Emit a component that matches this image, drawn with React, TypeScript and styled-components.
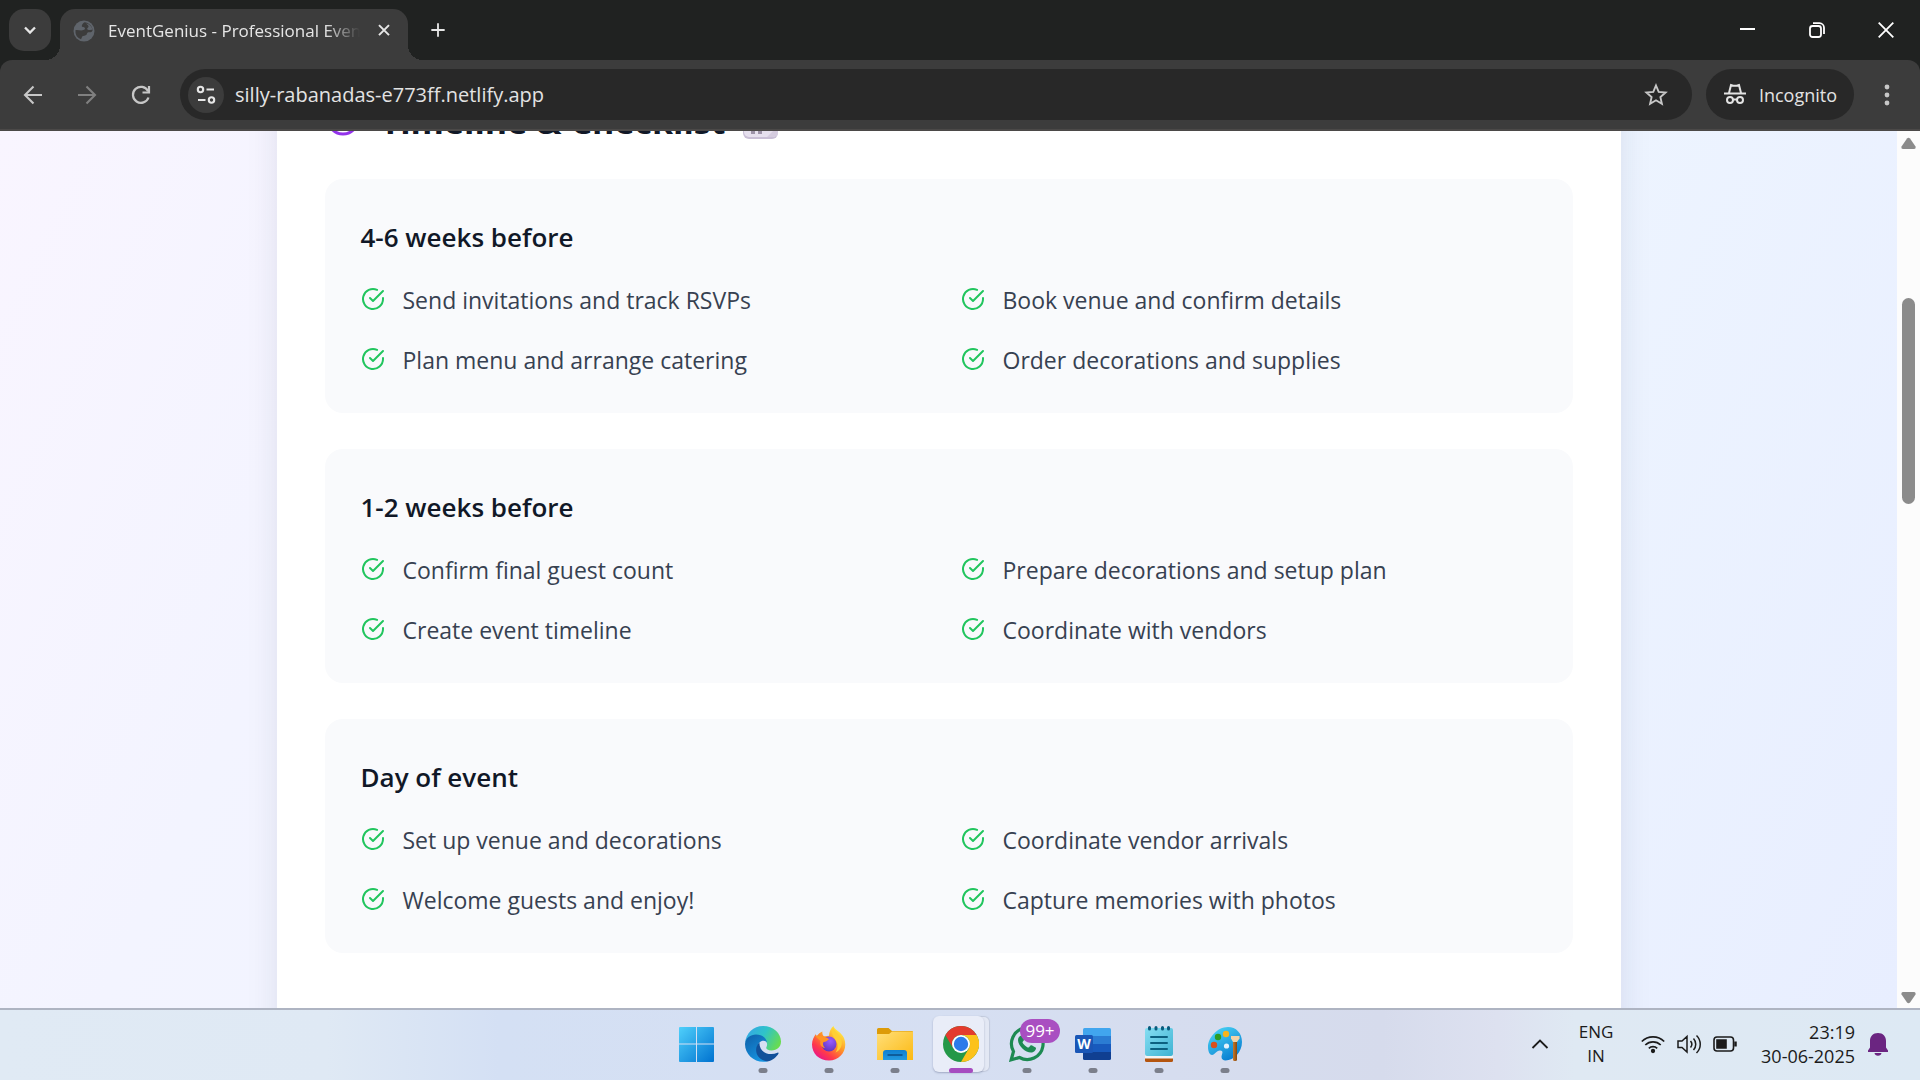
import React from 'react';
import styled, { createGlobalStyle } from 'styled-components';

const uiFont = `"Segoe UI", "Open Sans", "Noto Sans", sans-serif`;

const GlobalStyle = createGlobalStyle`
  * { box-sizing: border-box; }
  body { margin: 0; overflow: hidden; font-family: ${uiFont}; }
  button { border: 0; padding: 0; background: none; color: inherit; font: inherit; cursor: pointer; }
  h2, h3, ul { margin: 0; padding: 0; }
  svg { display: block; flex: none; }
`;

const Screen = styled.div`
  display: flex;
  flex-direction: column;
  height: 100vh;
`;

const TabStrip = styled.header`
  display: flex;
  align-items: flex-end;
  height: 60px;
  flex: none;
  padding-left: 9px;
  background: #202221;
  color: #e6e6e6;
`;

const TabSearch = styled.button`
  display: grid;
  place-items: center;
  width: 42px;
  height: 42px;
  margin: 0 9px 9px 0;
  border-radius: 15px;
  background: #3c3c3c;
`;

const Tab = styled.div`
  position: relative;
  display: flex;
  align-items: center;
  width: 348px;
  height: 51px;
  padding: 0 12px 8px 13px;
  border-radius: 15px 15px 0 0;
  background: #3c3c3c;

  &::before,
  &::after {
    content: '';
    position: absolute;
    bottom: 0;
    width: 15px;
    height: 15px;
  }
  &::before {
    left: -15px;
    background: radial-gradient(circle at 0 0, transparent 15px, #3c3c3c 15px);
  }
  &::after {
    right: -15px;
    background: radial-gradient(circle at 100% 0, transparent 15px, #3c3c3c 15px);
  }
`;

const TabTitle = styled.span`
  flex: 1;
  margin: 1px 12px 0 13px;
  overflow: hidden;
  white-space: nowrap;
  font-size: 17px;
  line-height: 24px;
  mask-image: linear-gradient(90deg, #000 86%, transparent);
`;

const IconButton = styled.button<{ $dim?: boolean; $size?: number }>`
  display: grid;
  place-items: center;
  flex: none;
  width: ${(p) => p.$size ?? 24}px;
  height: ${(p) => p.$size ?? 24}px;
  color: ${(p) => (p.$dim ? '#808080' : 'inherit')};
`;

const NewTab = styled(IconButton)`
  margin: 0 0 12px 12px;
`;

const WindowControls = styled.div`
  display: flex;
  align-self: stretch;
  margin-left: auto;
  color: #fff;
`;

const WindowButton = styled.button`
  display: grid;
  place-items: center;
  width: 69px;
`;

const ToolbarBack = styled.div`
  flex: none;
  background: #202221;
`;

const Toolbar = styled.nav`
  display: flex;
  align-items: center;
  height: 71px;
  padding: 0 15px 0 15px;
  border-bottom: 2px solid #4b4948;
  border-radius: 12px 12px 0 0;
  background: #3c3c3c;
  color: #c7c7c7;
`;

const NavButtons = styled.div`
  display: flex;
  gap: 18px;
  margin-right: 21px;
`;

const AddressBar = styled.div`
  display: flex;
  align-items: center;
  flex: 1;
  height: 51px;
  padding: 0 18px 0 8px;
  border-radius: 26px;
  background: #282828;
`;

const SiteInfo = styled.button`
  display: grid;
  place-items: center;
  width: 36px;
  height: 36px;
  border-radius: 50%;
  background: #3c3c3c;
  color: #e6e6e6;
`;

const AddressInput = styled.input`
  flex: 1;
  min-width: 0;
  padding: 0;
  margin-left: 11px;
  border: 0;
  outline: 0;
  background: transparent;
  color: #e3e3e3;
  font: 20px/30px ${uiFont};
`;

const IncognitoPill = styled.button`
  display: flex;
  align-items: center;
  gap: 12px;
  height: 51px;
  margin: 0 15px 0 14px;
  padding: 0 17px;
  border-radius: 26px;
  background: #282828;
  color: #e3e3e3;
  font-size: 18px;
`;

const Viewport = styled.div`
  display: flex;
  flex: 1;
  min-height: 0;
  overflow: hidden;
`;

const Page = styled.div`
  flex: 1;
  min-width: 0;
  overflow: hidden;
  background: linear-gradient(115deg, #f9f5ff 0%, #f3f4ff 22%, #edf4ff 70%, #e8eeff 100%);
`;

const Sheet = styled.main`
  max-width: 1344px;
  min-height: calc(100% + 72px);
  margin: -36px auto 0;
  padding: 0 48px;
  background: #fff;
  box-shadow: 0 0 30px rgba(30, 40, 80, 0.1);
`;

const SectionHeader = styled.div`
  display: flex;
  align-items: center;
  gap: 20px;
  height: 48px;
  margin-bottom: 36px;
  color: #9333ea;
`;

const SectionTitle = styled.h2`
  display: flex;
  align-items: center;
  gap: 18px;
  color: #111827;
  font-size: 34px;
  line-height: 52px;
  font-weight: 700;
  white-space: nowrap;
`;

const TitleText = styled.span`
  padding-top: 4px;
`;

const Phases = styled.div`
  display: grid;
  gap: 36px;
`;

const Phase = styled.section`
  padding: 37px 36px 35px;
  border-radius: 18px;
  background: #f9fafc;
`;

const PhaseTitle = styled.h3`
  margin-bottom: 24px;
  color: #111827;
  font-size: 26px;
  line-height: 42px;
  font-weight: 600;
`;

const TaskGrid = styled.ul`
  display: grid;
  grid-template-columns: 1fr 1fr;
  gap: 24px;
  list-style: none;
`;

const Task = styled.li`
  display: flex;
  gap: 18px;
  color: #374151;
  font-size: 23px;
  line-height: 36px;

  svg {
    margin-top: 5px;
    color: #22c55e;
  }
`;

const Scrollbar = styled.div`
  display: flex;
  flex-direction: column;
  align-items: center;
  width: 23px;
  padding: 6px 0 4px;
  background: #fcfcfc;
  color: #8b8b8b;
`;

const ScrollTrack = styled.div`
  flex: 1;
  width: 13px;
  padding-top: 149px;
`;

const ScrollThumb = styled.div`
  height: 206px;
  border-radius: 7px;
  background: #8b8b8b;
`;

const Taskbar = styled.footer`
  display: grid;
  grid-template-columns: 1fr auto 1fr;
  flex: none;
  height: 72px;
  border-top: 2px solid #aeb4c2;
  background: linear-gradient(90deg, #e0eaf4 0%, #dfe9f4 17%, #d4e0f4 26%, #d6dff2 50%, #d6dbec 72%, #dde1f0 78%, #dfe9f3 82%, #dde9f4 100%);
  color: #1b1b1b;
`;

const Apps = styled.div`
  grid-column: 2;
  display: flex;
  padding-left: 2px;
`;

const AppButton = styled.button`
  position: relative;
  display: grid;
  place-items: center;
  width: 66px;
  height: 68px;
`;

const ActiveTile = styled.span`
  position: absolute;
  top: 6px;
  left: 5px;
  width: 51px;
  height: 56px;
  border-radius: 6px;
  background: #e9edf8;
  box-shadow: 0 1px 2px rgba(60, 70, 110, 0.35), 6px 0 0 -1px #e3e8f4, 6px 0 1px 0 #c2cadc;
`;

const AppIcon = styled.span`
  position: relative;
`;

const Indicator = styled.span<{ $active?: boolean }>`
  position: absolute;
  bottom: 5px;
  left: 50%;
  width: ${(p) => (p.$active ? 24 : 9)}px;
  height: 5px;
  border-radius: 3px;
  background: ${(p) => (p.$active ? '#a64cc0' : '#7b7f8b')};
  transform: translateX(-50%);
`;

const Badge = styled.span`
  position: absolute;
  top: 9px;
  left: 26px;
  width: 40px;
  height: 24px;
  border-radius: 12px;
  background: #a94fc1;
  color: #fff;
  font-size: 17px;
  line-height: 24px;
  text-align: center;
`;

const Tray = styled.div`
  display: flex;
  align-items: center;
  justify-content: flex-end;
  padding: 0 30px 2px 0;
  font-size: 18px;
  line-height: 24px;
`;

const Language = styled.button`
  width: 48px;
  margin: 0 21px 0 20px;
  font-size: 17px;
  text-align: center;
`;

const Status = styled.button`
  display: flex;
  gap: 12px;
  margin-right: 24px;
`;

const Clock = styled.button`
  margin-right: 11px;
  text-align: right;
`;

const Stroke = ({ size = 24, width = 2, children, box = 24 }: { size?: number; width?: number; box?: number; children: React.ReactNode }) => (
  <svg width={size} height={size} viewBox={`0 0 ${box} ${box}`} fill="none" stroke="currentColor" strokeWidth={width} aria-hidden="true">
    {children}
  </svg>
);

const CheckIcon = () => (
  <Stroke>
    <g strokeLinecap="round" strokeLinejoin="round">
      <path d="M22 11.08V12a10 10 0 1 1-5.93-9.14" />
      <path d="m9 11 3 3L22 4" />
    </g>
  </Stroke>
);

const phases = [
  { title: '4-6 weeks before', tasks: ['Send invitations and track RSVPs', 'Book venue and confirm details', 'Plan menu and arrange catering', 'Order decorations and supplies'] },
  { title: '1-2 weeks before', tasks: ['Confirm final guest count', 'Prepare decorations and setup plan', 'Create event timeline', 'Coordinate with vendors'] },
  { title: 'Day of event', tasks: ['Set up venue and decorations', 'Coordinate vendor arrivals', 'Welcome guests and enjoy!', 'Capture memories with photos'] },
];

const WindowsLogo = () => (
  <svg width="36" height="36" viewBox="0 0 36 36">
    <defs>
      <linearGradient id="win" x1="0" y1="0" x2="1" y2="1">
        <stop offset="0" stopColor="#4fd0fb" />
        <stop offset="1" stopColor="#0072d0" />
      </linearGradient>
    </defs>
    <path fill="url(#win)" d="M0 2a1 1 0 0 1 1-1h16v16.500H0zM18 1h16a1 1 0 0 1 1 1v15.500H18zM0 18.500h17V36H1a1 1 0 0 1-1-1zM18 18.500h17V35a1 1 0 0 1-1 1H18z" />
  </svg>
);

const EdgeLogo = () => (
  <svg width="36" height="36" viewBox="0 0 36 36">
    <defs>
      <linearGradient id="eTop" x1="0" y1="0.2" x2="1" y2="0.6">
        <stop offset="0" stopColor="#35a6e8" />
        <stop offset="0.5" stopColor="#2fc3c9" />
        <stop offset="1" stopColor="#68dc50" />
      </linearGradient>
      <linearGradient id="eLeft" x1="0" y1="0" x2="0.6" y2="1">
        <stop offset="0" stopColor="#0f5fa8" />
        <stop offset="1" stopColor="#1593e0" />
      </linearGradient>
    </defs>
    <path fill="url(#eTop)" d="M0 17C1 7 8.500 0 18 0c10.500 0 18 7.500 18 15.500C36 21 32 24.500 26.500 24.500c-4.500 0-6-2-5-3.600 1.200-2 1-6.900-4.500-8.400C10 10.500 2 12 0 17z" />
    <path fill="url(#eLeft)" d="M0 18c.5-6 5.500-9.500 11-9.500 7 0 11 4.500 11 8.500 0-2-4-3.500-7-1-5 4.500-3 16 7.500 19.400C11 38 0 29.500 0 18z" />
    <path fill="#11509a" d="M14.500 16.500C8 22 11 34 22.500 35.400 28 34.500 32 30.500 33.500 27.500c.3-.8-.3-1.200-1-.8C24 30.500 14 26 14.500 16.500z" />
  </svg>
);

const FirefoxLogo = () => (
  <svg width="36" height="36" viewBox="0 0 36 36">
    <defs>
      <linearGradient id="ff" x1="0.85" y1="0.1" x2="0.2" y2="0.95">
        <stop offset="0" stopColor="#fff04a" />
        <stop offset="0.4" stopColor="#ff9a26" />
        <stop offset="0.75" stopColor="#ff3a4a" />
        <stop offset="1" stopColor="#e9158a" />
      </linearGradient>
      <radialGradient id="ffCore" cx="0.6" cy="0.3" r="0.8">
        <stop offset="0" stopColor="#9a5cff" />
        <stop offset="1" stopColor="#5a2fb8" />
      </radialGradient>
    </defs>
    <path fill="url(#ff)" d="M22.500 0c1 4 8 6 10.500 12 4.500 11.500-3.500 22.500-15 22.500C8 34.500 1 27.500 1 18.500 1 14 3 10.500 5 8c0 1.500.3 2 .8 2.500C7 8 9.500 6 11.500 5.500c-.5 1.500 0 3 1 4.500 2 .5 3.500 0 5.500-.3C18 6 20 2 22.500 0z" />
    <circle cx="18" cy="18" r="7.500" fill="url(#ffCore)" />
    <path fill="#ff9424" d="M4 10c4-1 7 .2 8.500 1.200 2-.2 4.500.3 5.500 2.300-2 1-3 2.500-5.500 2.500-1 2-.5 4 1.500 6-4-.5-5.500-4-4.500-7z" />
    <path fill="#ffcf35" d="M22 1c1 4 7 7.500 8.500 13 1.500 6-2 11-6 12.500 3-4 2.500-9 .5-12-1.500-2.500-6-7-3-13.500z" />
  </svg>
);

const FolderLogo = () => (
  <svg width="36" height="36" viewBox="0 0 36 36">
    <defs>
      <linearGradient id="fold" x1="0" y1="0" x2="1" y2="1">
        <stop offset="0" stopColor="#ffdf7a" />
        <stop offset="1" stopColor="#fcb912" />
      </linearGradient>
      <linearGradient id="foldTab" x1="0" y1="0" x2="0" y2="1">
        <stop offset="0" stopColor="#0f7fd0" />
        <stop offset="1" stopColor="#2399df" />
      </linearGradient>
    </defs>
    <path fill="#dd9b08" d="M0 3.500A1.500 1.500 0 0 1 1.500 2h10L15 5h20a1 1 0 0 1 1 1v6H0z" />
    <path fill="url(#fold)" d="M0 8h12l3-2.500h21V34H0z" />
    <path fill="url(#foldTab)" d="M6 27a3 3 0 0 1 3-3h18a3 3 0 0 1 3 3v7H6z" />
    <path stroke="#0b4c86" strokeWidth="1.500" d="M10.500 29h15" />
  </svg>
);

const ChromeLogo = () => (
  <svg width="36" height="36" viewBox="0 0 36 36">
    <circle cx="18" cy="18" r="18" fill="#249848" />
    <path fill="#e33b2e" d="M2.400 9A18 18 0 0 1 33.600 9H18a9 9 0 0 0-7.800 13.500z" />
    <path fill="#fcc21b" d="M33.600 9A18 18 0 0 1 18 36l7.800-13.500A9 9 0 0 0 18 9z" />
    <circle cx="18" cy="18" r="9" fill="#fff" />
    <circle cx="18" cy="18" r="7.200" fill="#2c7bea" />
  </svg>
);

const WhatsAppLogo = () => (
  <svg width="36" height="36" viewBox="0 0 36 36">
    <path fill="none" stroke="#1d8a52" strokeWidth="3.200" d="M2.200 33.800 4.500 25.500A15.800 15.800 0 1 1 10.500 31.500z" />
    <path fill="#1d8a52" d="M12.500 9.500c-2 .3-3.500 2-3.500 4.500 0 6 7.500 12.500 13 12.500 2.500 0 5-2 5-4.500 0-.5-4.500-3-5.200-2.700-.8.4-1.500 2.200-2.400 2.200-1.400 0-5.900-4-5.900-5.300 0-.8 1.500-1.600 1.500-2.500 0-.8-1.500-4.200-2.500-4.200z" />
  </svg>
);

const WordLetter = styled.span`
  position: absolute;
  left: 0;
  top: 9px;
  width: 18px;
  color: #fff;
  font-size: 14px;
  line-height: 18px;
  font-weight: 700;
  text-align: center;
`;

const WordLogo = () => (
  <>
    <svg width="36" height="36" viewBox="0 0 36 36">
      <path fill="#41a5ee" d="M8 3.500A1.500 1.500 0 0 1 9.500 2h25A1.500 1.500 0 0 1 36 3.500V10H8z" />
      <path fill="#2b7cd3" d="M8 10h28v8H8z" />
      <path fill="#185abd" d="M8 18h28v8H8z" />
      <path fill="#103f91" d="M8 26h28v6.500a1.500 1.500 0 0 1-1.500 1.500h-25A1.500 1.500 0 0 1 8 32.500z" />
      <rect y="9" width="18" height="18" rx="1.500" fill="#1a56b6" />
    </svg>
    <WordLetter>W</WordLetter>
  </>
);

const NotepadLogo = () => (
  <svg width="36" height="36" viewBox="0 0 36 36">
    <defs>
      <linearGradient id="note" x1="0" y1="0" x2="1" y2="1">
        <stop offset="0" stopColor="#86def2" />
        <stop offset="1" stopColor="#3fb3d3" />
      </linearGradient>
    </defs>
    <rect x="4" y="27" width="28" height="9" rx="1.500" fill="#b4550f" />
    <path fill="#f4f4f4" d="M4 28h28v4.500H4z" />
    <rect x="4" y="2" width="28" height="28" rx="2" fill="url(#note)" />
    <path stroke="#0a5c7e" strokeWidth="3" strokeLinecap="round" d="M8.500 1.500v1.500M15 1.500v1.500M21.500 1.500v1.500M27.500 1.500v1.500" />
    <path stroke="#0c6080" strokeWidth="2" strokeLinecap="round" d="M10 11h16M10 17h16M10 23h16" />
  </svg>
);

const PaintLogo = () => (
  <svg width="36" height="36" viewBox="0 0 36 36">
    <defs>
      <linearGradient id="pal" x1="0" y1="0" x2="0.6" y2="1">
        <stop offset="0" stopColor="#4fdcf8" />
        <stop offset="1" stopColor="#0b80d2" />
      </linearGradient>
      <linearGradient id="brush" x1="0" y1="0" x2="1" y2="0">
        <stop offset="0" stopColor="#c67a2c" />
        <stop offset="1" stopColor="#87480e" />
      </linearGradient>
    </defs>
    <path fill="url(#pal)" d="M21 1C10 1 1 12 1 21c0 5 2 8 4 8 3 0 4-4.500 8-4.500 4.500 0 1.500 4 1.500 6.500 0 2 1.800 3.500 4 3.500C27 34.500 35 26 35 16 35 7 29 1 21 1z" />
    <circle cx="7" cy="19" r="3.200" fill="#d9501e" />
    <circle cx="11" cy="11" r="3.200" fill="#2c9c22" />
    <circle cx="19" cy="8" r="3.200" fill="#f8b41c" />
    <circle cx="19.500" cy="20" r="2.600" fill="#e3f1fb" />
    <path fill="url(#brush)" d="M26 15h4v18.500a1.500 1.500 0 0 1-1.500 1.500h-1a1.500 1.500 0 0 1-1.500-1.500z" />
    <path fill="#f1d3a8" d="M24 10h8.500v2.500L30 16h-4l-2-3.500z" />
  </svg>
);

const apps = [
  { name: 'Start', logo: <WindowsLogo />, running: false },
  { name: 'Microsoft Edge', logo: <EdgeLogo />, running: true },
  { name: 'Firefox', logo: <FirefoxLogo />, running: true },
  { name: 'File Explorer', logo: <FolderLogo />, running: true },
  { name: 'Google Chrome', logo: <ChromeLogo />, running: true, active: true },
  { name: 'WhatsApp', logo: <WhatsAppLogo />, running: true, badge: '99+' },
  { name: 'Word', logo: <WordLogo />, running: true },
  { name: 'Notepad', logo: <NotepadLogo />, running: true },
  { name: 'Paint', logo: <PaintLogo />, running: true },
];

export default function App() {
  return (
    <Screen>
      <GlobalStyle />
      <TabStrip>
        <TabSearch aria-label="Search tabs">
          <Stroke size={20} width={2.8}><path d="m6 9 6 6 6-6" /></Stroke>
        </TabSearch>
        <Tab>
          <svg width="22" height="22" viewBox="0 0 22 22" aria-hidden="true">
            <circle cx="11" cy="11" r="10.500" fill="#5f646b" />
            <path fill="#3c3c3c" d="M11.500 2.300c-1.500 1-2.700 2.200-2.700 3.700 0 1.500 3.200.8 3.200 2.500 0 1.300-1.500 1.500-2.500 1.800-2 .5-4.500-.8-7-.3A8.700 8.700 0 0 0 8 19.200c1-1 .5-2.700 2-3.200 2-.6 3.700-.5 4-2.500.2-1.500 2-1 3.500-1.200 1.200-.2 2-1.200 2.200-2.300C19 6 15.500 2.500 11.500 2.300z" />
            <path fill="#5f646b" d="M13 3.500c1 1 3 2 2.500 3.500-.5 1-1.500 1-1.300 2 .3 1 2.300 1.200 3.800.8 1-.3 1.500.2 1.500.2C19 6.500 16.500 4 13 3.500z" />
          </svg>
          <TabTitle>EventGenius - Professional Event Planning</TabTitle>
          <IconButton aria-label="Close tab">
            <Stroke size={20} width={2.4}><path d="m6 5 12 12M18 5 6 17" /></Stroke>
          </IconButton>
        </Tab>
        <NewTab aria-label="New tab" $size={36}>
          <Stroke size={20} width={2.2}><path d="M12 4v16M4 12h16" /></Stroke>
        </NewTab>
        <WindowControls>
          <WindowButton aria-label="Minimize">
            <Stroke size={16} box={16} width={2}><path d="M0 7h15" /></Stroke>
          </WindowButton>
          <WindowButton aria-label="Restore">
            <Stroke size={16} box={16} width={1.8}>
              <rect x="1" y="4" width="11" height="11" rx="2.500" />
              <path d="M4 1.200h6.500a4.500 4.500 0 0 1 4.500 4.500V12" />
            </Stroke>
          </WindowButton>
          <WindowButton aria-label="Close">
            <Stroke size={16} box={16} width={1.8}><path d="m.7.7 14.600 14.600M15.300.7.700 15.300" /></Stroke>
          </WindowButton>
        </WindowControls>
      </TabStrip>

      <ToolbarBack>
        <Toolbar aria-label="Browser toolbar">
          <NavButtons>
            <IconButton aria-label="Back" $size={36}>
              <Stroke size={20} box={20} width={2.1}><path d="M19 10H2M10.500 1.500 2 10l8.500 8.500" /></Stroke>
            </IconButton>
            <IconButton aria-label="Forward" $size={36} $dim>
              <Stroke size={20} box={20} width={2.1}><path d="M1 10h17M9.500 1.500 18 10l-8.500 8.500" /></Stroke>
            </IconButton>
            <IconButton aria-label="Reload" $size={36}>
              <Stroke size={20} box={20} width={2.2}><path d="M17.500 12.500A8 8 0 1 1 17 6M18 1v6.500h-6.500" /></Stroke>
            </IconButton>
          </NavButtons>
          <AddressBar>
            <SiteInfo aria-label="View site information">
              <Stroke size={20} box={20} width={2.1}>
                <circle cx="4.500" cy="4.500" r="2.700" /><path d="M10.500 4.500H18M2 15h7.500" /><circle cx="15.500" cy="15" r="2.700" />
              </Stroke>
            </SiteInfo>
            <AddressInput aria-label="Address" defaultValue="silly-rabanadas-e773ff.netlify.app" />
            <IconButton aria-label="Bookmark this tab" $size={36}>
              <Stroke size={24} width={1.9}>
                <path d="m12 2.500 2.700 6.400 6.900.6-5.200 4.600 1.500 6.800-5.900-3.600-5.900 3.600 1.500-6.800-5.200-4.600 6.900-.6z" />
              </Stroke>
            </IconButton>
          </AddressBar>
          <IncognitoPill>
            <svg width="24" height="24" viewBox="0 0 24 24" fill="none" stroke="currentColor" strokeWidth="2" aria-hidden="true">
              <path d="M1 10.500h22M6 10l2-8 2.200.8h3.600L16 2l2 8" />
              <circle cx="7" cy="17" r="3" /><circle cx="17" cy="17" r="3" /><path d="M10 16.500h4" />
            </svg>
            Incognito
          </IncognitoPill>
          <IconButton aria-label="Chrome menu" $size={36}>
            <svg width="6" height="22" viewBox="0 0 6 22" fill="currentColor">
              <circle cx="3" cy="3" r="2.400" /><circle cx="3" cy="11" r="2.400" /><circle cx="3" cy="19" r="2.400" />
            </svg>
          </IconButton>
        </Toolbar>
      </ToolbarBack>

      <Viewport>
        <Page>
          <Sheet>
            <SectionHeader>
              <Stroke size={36}><circle cx="12" cy="12" r="10" /><path d="M12 6v6l4 2" strokeLinecap="round" /></Stroke>
              <SectionTitle>
                <TitleText>Timeline &amp; Checklist</TitleText>
                <svg width="36" height="40" viewBox="0 0 36 40" aria-hidden="true">
                  <rect x="0" y="4" width="35" height="36" rx="6" fill="#c9bfd6" />
                  <rect x="1" y="4" width="34" height="34" rx="5" fill="#e6e0ee" />
                  <path fill="#9d93a8" d="M8 28h4v7H8zM15 28h4v7h-4z" />
                  <path fill="#d5ccdf" d="M24 38 35 27v6a5 5 0 0 1-5 5z" />
                </svg>
              </SectionTitle>
            </SectionHeader>
            <Phases>
              {phases.map((phase) => (
                <Phase key={phase.title}>
                  <PhaseTitle>{phase.title}</PhaseTitle>
                  <TaskGrid>
                    {phase.tasks.map((task) => (
                      <Task key={task}>
                        <CheckIcon />
                        {task}
                      </Task>
                    ))}
                  </TaskGrid>
                </Phase>
              ))}
            </Phases>
          </Sheet>
        </Page>
        <Scrollbar>
          <svg width="15" height="12" viewBox="0 0 15 12" fill="currentColor"><path d="M6 1.500Q7.500 0 9 1.500l5.500 8Q15 12 13 12H2Q0 12 .5 9.500z" /></svg>
          <ScrollTrack><ScrollThumb /></ScrollTrack>
          <svg width="15" height="12" viewBox="0 0 15 12" fill="currentColor"><path d="M6 10.500Q7.500 12 9 10.500l5.500-8Q15 0 13 0H2Q0 0 .5 2.500z" /></svg>
        </Scrollbar>
      </Viewport>

      <Taskbar>
        <Apps>
          {apps.map((app) => (
            <AppButton key={app.name} aria-label={app.name}>
              {app.active && <ActiveTile />}
              <AppIcon>{app.logo}</AppIcon>
              {app.badge && <Badge>{app.badge}</Badge>}
              {app.running && <Indicator $active={app.active} />}
            </AppButton>
          ))}
        </Apps>
        <Tray>
          <IconButton aria-label="Show hidden icons">
            <Stroke size={18} box={18} width={1.8}><path d="m1.500 13 7.500-7.500 7.500 7.500" /></Stroke>
          </IconButton>
          <Language>ENG<br />IN</Language>
          <Status aria-label="Network, sound and battery">
            <Stroke size={24} width={1.7}>
              <path d="M.8 9.500a16 16 0 0 1 22.400 0M4.300 13a11 11 0 0 1 15.400 0M7.800 16.300a6 6 0 0 1 8.400 0" />
              <circle cx="12" cy="19" r="1.300" fill="currentColor" />
            </Stroke>
            <Stroke size={24} width={1.5}>
              <path d="M1 9v6.500h4L10 20V4.500L5 9zM13.500 9a5 5 0 0 1 0 6.500M16.500 6.500a8.500 8.500 0 0 1 0 11.500M19.500 3.500c5 5 5 12.500 0 17.500" />
            </Stroke>
            <Stroke size={24} width={1.6}>
              <rect x="1" y="5" width="19.500" height="14" rx="3" />
              <path d="M4 8h9v8H4z" fill="currentColor" />
              <path d="M22.500 9.500v5" strokeWidth="2.500" />
            </Stroke>
          </Status>
          <Clock>23:19<br />30-06-2025</Clock>
          <IconButton aria-label="Notifications">
            <svg width="24" height="24" viewBox="0 0 24 24" fill="#6b2581">
              <path d="M12 1c5 0 8 3.500 8 8v6.500l2 3V20H2v-1.500l2-3V9c0-4.500 3-8 8-8zM8.500 21h7Q15 23.800 12 23.800T8.500 21z" />
            </svg>
          </IconButton>
        </Tray>
      </Taskbar>
    </Screen>
  );
}
